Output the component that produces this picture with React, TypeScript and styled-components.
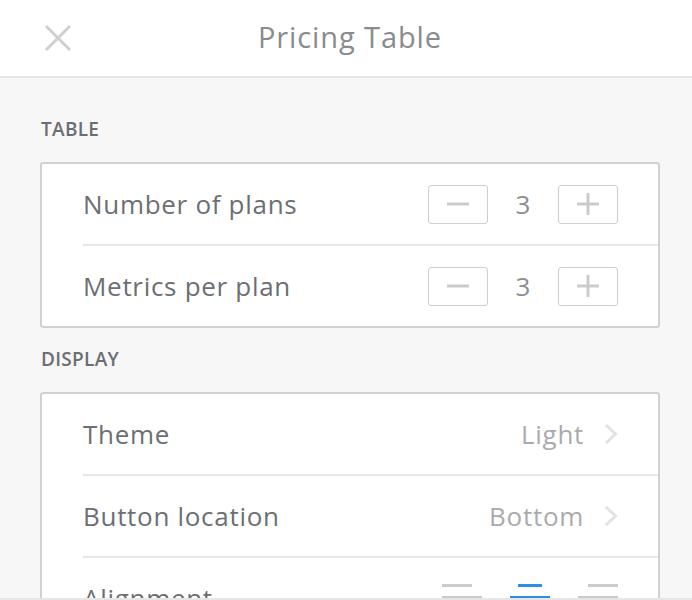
import React from "react";
import styled, { createGlobalStyle } from "styled-components";

const Global = createGlobalStyle`
  html, body { margin: 0; padding: 0; }
  body { font-family: "Open Sans", "Liberation Sans", sans-serif; background: #f7f7f7; }
  * { box-sizing: border-box; }
`;

const Screen = styled.div`
  height: 100vh;
  display: flex;
  flex-direction: column;
  background: #f7f7f7;
  overflow: hidden;
`;

const Header = styled.header`
  flex: none;
  height: 78px;
  background: #fff;
  border-bottom: 2px solid #e6e6e6;
  display: grid;
  grid-template-columns: 100px 1fr 100px;
  align-items: center;
`;

const CloseButton = styled.button`
  border: 0;
  background: none;
  padding: 0;
  margin-left: 43px;
  width: 30px;
  height: 30px;
  display: flex;
  align-items: center;
  justify-content: center;
  cursor: pointer;
`;

const Title = styled.h1`
  margin: 0 0 3px;
  padding-left: 8px;
  text-align: center;
  font-size: 29px;
  font-weight: 400;
  color: #8a8b8c;
  letter-spacing: 0.9px;
`;

const Body = styled.main`
  flex: 1;
  overflow: hidden;
  padding: 0 32px 0 40px;
`;

const SectionLabel = styled.h2<{ $top: number }>`
  margin: ${(p) => p.$top}px 0 0 1px;
  height: 43px;
  font-size: 19px;
  font-weight: 600;
  color: #6b6f73;
  letter-spacing: 0.3px;
  line-height: 20px;
`;

const Card = styled.section`
  background: #fff;
  border: 2px solid #cfd1d3;
  border-radius: 3px;
`;

const Row = styled.div<{ $last?: boolean }>`
  margin-left: 41px;
  height: ${(p) => (p.$last ? 80 : 82)}px;
  padding-right: 40px;
  display: flex;
  align-items: center;
  justify-content: space-between;
  border-bottom: ${(p) => (p.$last ? "none" : "2px solid #e6e7e8")};
`;

const Label = styled.span`
  font-size: 26px;
  color: #6b6f73;
  letter-spacing: 0.7px;
`;

const Stepper = styled.div`
  display: flex;
  align-items: center;
`;

const StepButton = styled.button`
  width: 60px;
  height: 39px;
  border: 1.5px solid #ccced0;
  border-radius: 3px;
  background: #fff;
  display: flex;
  align-items: center;
  justify-content: center;
  padding: 0;
  cursor: pointer;
`;

const StepValue = styled.span`
  width: 70px;
  text-align: center;
  font-size: 26px;
  color: #8c8f92;
`;

const Value = styled.div`
  display: flex;
  align-items: center;
  gap: 20px;
  font-size: 26px;
  letter-spacing: 0.7px;
  color: #a9abad;
`;

const AlignGroup = styled.div`
  display: flex;
  gap: 28px;
  margin-top: -2px;
`;

const AlignIcon = styled.div<{ $align: "flex-start" | "center" | "flex-end"; $active?: boolean }>`
  width: 40px;
  display: flex;
  flex-direction: column;
  align-items: ${(p) => p.$align};
  gap: 9px;
  & > span {
    display: block;
    height: 3px;
    background: ${(p) => (p.$active ? "#2b8fe9" : "#c9cbcd")};
  }
  & > span:nth-child(odd) { width: 30px; }
  & > span:nth-child(even) { width: 40px; }
  & > span:nth-child(1) { width: ${(p) => (p.$align === "center" ? "24px" : "30px")}; }
`;

const Footer = styled.footer`
  flex: none;
  height: 2px;
  background: #e6e6e6;
`;

const Minus = () => (
  <svg width="22" height="4" viewBox="0 0 22 4">
    <rect x="0" y="0.5" width="22" height="3" fill="#c9cbcd" />
  </svg>
);

const Plus = () => (
  <svg width="22" height="22" viewBox="0 0 22 22">
    <rect x="0" y="9.5" width="22" height="3" fill="#c9cbcd" />
    <rect x="9.5" y="0" width="3" height="22" fill="#c9cbcd" />
  </svg>
);

const Chevron = () => (
  <svg width="14" height="22" viewBox="0 0 14 22">
    <path d="M2 2 L11.5 11 L2 20" fill="none" stroke="#e1e2e3" strokeWidth="3" />
  </svg>
);

const CloseIcon = () => (
  <svg width="28" height="28" viewBox="0 0 28 28">
    <path d="M2 2 L26 26 M26 2 L2 26" stroke="#cfd0d1" strokeWidth="3" fill="none" />
  </svg>
);

const StepperRow = ({ label, value, last }: { label: string; value: number; last?: boolean }) => (
  <Row $last={last}>
    <Label>{label}</Label>
    <Stepper>
      <StepButton aria-label="decrease"><Minus /></StepButton>
      <StepValue>{value}</StepValue>
      <StepButton aria-label="increase"><Plus /></StepButton>
    </Stepper>
  </Row>
);

const SelectRow = ({ label, value }: { label: string; value: string }) => (
  <Row>
    <Label>{label}</Label>
    <Value>
      {value}
      <Chevron />
    </Value>
  </Row>
);

export default function App() {
  return (
    <>
      <Global />
      <Screen>
        <Header>
          <CloseButton aria-label="close"><CloseIcon /></CloseButton>
          <Title>Pricing Table</Title>
          <span />
        </Header>
        <Body>
          <SectionLabel $top={41}>TABLE</SectionLabel>
          <Card>
            <StepperRow label="Number of plans" value={3} />
            <StepperRow label="Metrics per plan" value={3} last />
          </Card>
          <SectionLabel $top={21}>DISPLAY</SectionLabel>
          <Card>
            <SelectRow label="Theme" value="Light" />
            <SelectRow label="Button location" value="Bottom" />
            <Row $last>
              <Label>Alignment</Label>
              <AlignGroup>
                <AlignIcon $align="flex-start"><span /><span /><span /></AlignIcon>
                <AlignIcon $align="center" $active><span /><span /><span /></AlignIcon>
                <AlignIcon $align="flex-end"><span /><span /><span /></AlignIcon>
              </AlignGroup>
            </Row>
          </Card>
        </Body>
        <Footer />
      </Screen>
    </>
  );
}
